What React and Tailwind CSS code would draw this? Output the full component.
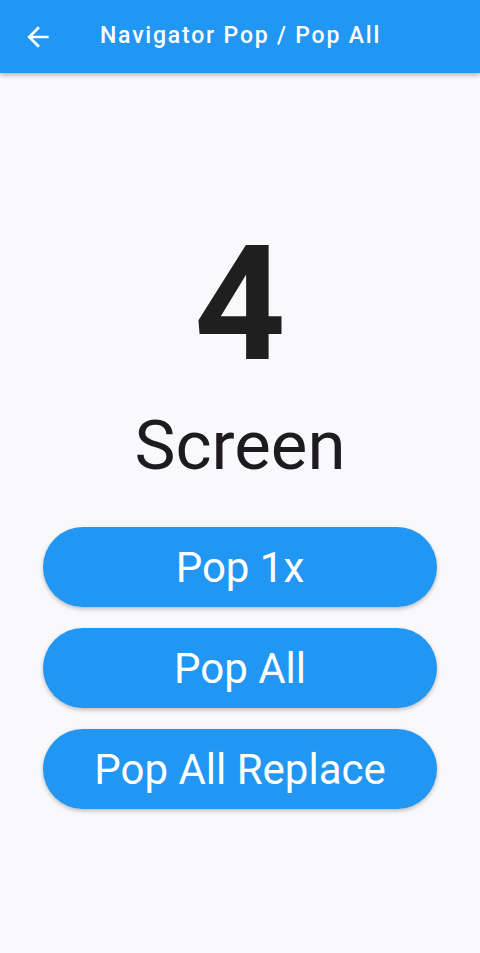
const BUTTONS = ['Pop 1x', 'Pop All', 'Pop All Replace']

function BackArrow() {
  return (
    <svg width="32" height="32" viewBox="0 0 24 24" fill="white" aria-hidden="true">
      <path d="M20 11H7.83l5.59-5.59L12 4l-8 8 8 8 1.41-1.41L7.83 13H20v-2z" />
    </svg>
  )
}

export default function App() {
  return (
    <div className="min-h-[953px] w-[480px] bg-[#f9f8fb] font-['Roboto',sans-serif] text-[#1d1b20]">
      <header className="h-[73px] bg-[#2196f3] flex items-center shadow-[0_2px_5px_rgba(0,0,0,0.3)] relative z-10">
        <div className="w-[75px] flex justify-center">
          <BackArrow />
        </div>
        <h1 className="text-white text-[23px] tracking-[1.8px] font-medium ml-[25px]">Navigator Pop / Pop All</h1>
      </header>

      <main className="flex flex-col items-center pt-[152px]">
        <div className="text-[160px] font-bold leading-none text-[#1f1f1f]">4</div>
        <div className="text-[69px] leading-none mt-[26px]">Screen</div>

        <div className="w-[394px] mt-[47px] flex flex-col gap-[21px]">
          {BUTTONS.map(label => (
            <button
              key={label}
              className="h-[80px] rounded-full bg-[#2196f3] text-white text-[42px] shadow-[0_2px_4px_rgba(0,0,0,0.25)]"
            >
              {label}
            </button>
          ))}
        </div>
      </main>
    </div>
  )
}
